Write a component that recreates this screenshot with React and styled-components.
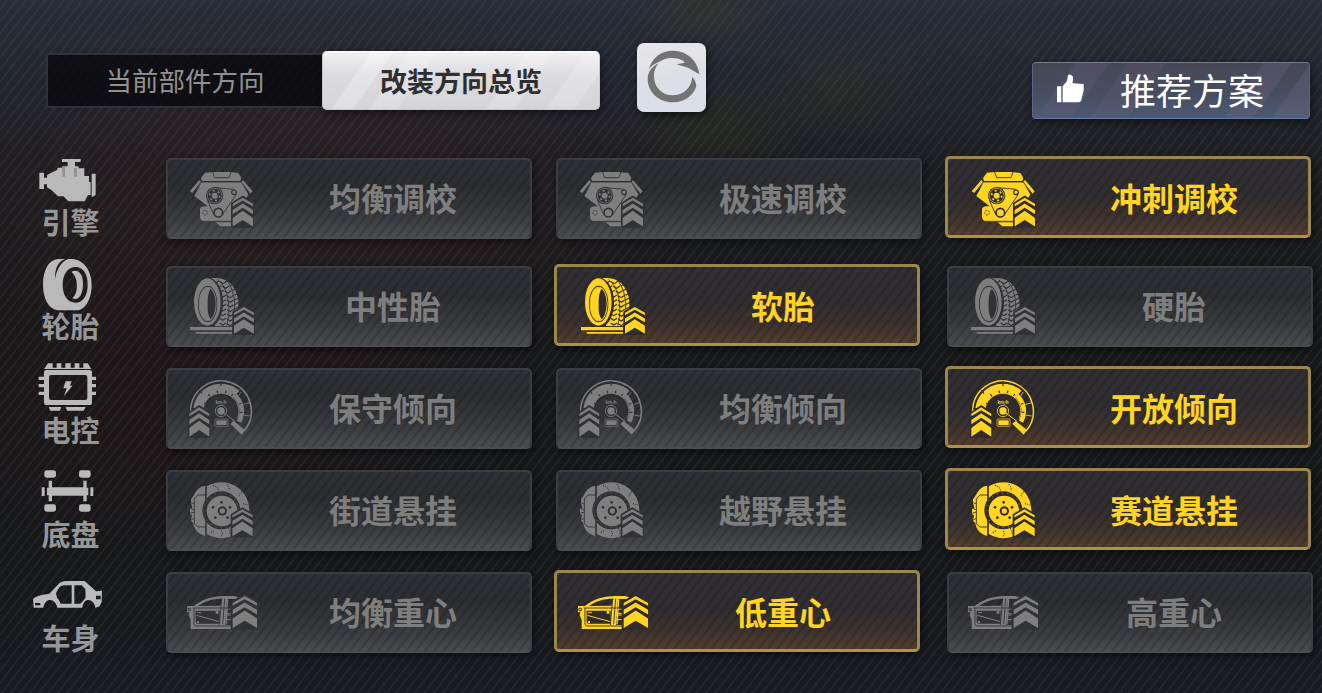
import React from 'react'
import styled, { createGlobalStyle, css } from 'styled-components'

const GlobalStyle = createGlobalStyle`
  * { box-sizing: border-box; }
  body {
    margin: 0;
    background: #1c1c1f;
    font-family: "Noto Sans CJK SC", "Noto Sans", sans-serif;
  }
`

const Chevrons = ({ x, y, sx = 1, sy = 1 }) => (
  <g transform={`translate(${x} ${y}) scale(${sx} ${sy})`}>
    <path className="cut" d="M-5 92V16L30 -7L64 15V92Z" />
    <path d="M0 19L30 0L61 19V27L30 9L0 27Z" />
    <path d="M0 38L30 18L61 38V51L30 31L0 51Z" />
    <path d="M0 62L30 40L61 62V88L30 68L0 88Z" />
  </g>
)

const EngineTune = () => (
  <PartSvg viewBox="81 57 216 198">
    <path d="M138 83L162 81H212L238 84L247 99L244 108H129L126 99Z" />
    <path d="M128 112H246L268 148L263 157L216 230H134Q123 226 123 214V192Q125 184 137 184H146L106 153Z" />
    <path d="M121 105L92 139L100 144L128 113ZM252 105L281 139L274 147L245 113Z" />
    <path d="M170 232H216V244H184Z" />
    <g className="line">
      <path d="M161 81L167 98H210L216 81M127 110H246M127 110L101 145M246 110L275 148" />
      <path d="M145 166L164 208M168 128L226 133M232 148L190 210M131 229H220" />
      <circle cx="138" cy="203" r="7" strokeDasharray="5 3" />
      <circle cx="225" cy="142" r="7" strokeWidth="3.5" />
      <circle cx="178" cy="203" r="13" strokeWidth="5" />
    </g>
    <circle className="cut" cx="167" cy="152" r="26" />
    <circle cx="167" cy="152" r="22" fill="none" stroke="currentColor" strokeWidth="2" />
    <circle cx="167" cy="152" r="15" fill="none" stroke="currentColor" strokeWidth="5" strokeDasharray="6 9.7" />
    <circle cx="167" cy="152" r="9" />
    <Chevrons x={221} y={158} sy={0.98} />
  </PartSvg>
)

const TyreTune = () => (
  <PartSvg viewBox="93 51 216 198">
    <path d="M168 70C205 66 226 80 238 101C250 122 253 145 248 165L232 213H180Z" />
    <g className="line">
      {[78, 92, 106, 120, 134, 148, 162, 176, 190, 204].map((y, i) => {
        const s = i < 3 ? (i - 3) * 7 : 0
        return <path key={y} d={`M${194 + s} ${y}L${203 + s} ${y + 6}L${213 + s} ${y}M${216 + s} ${y + 2}L${226 + s} ${y + 8}L${236 + s} ${y + 1}M${238 + s} ${y + 1}L${252 + s} ${y - 6}`} strokeWidth="3.4" />
      })}
      <path d="M188 74C221 98 229 165 215 211M211 72C237 98 244 150 236 173" />
    </g>
    <ellipse className="cut" cx="162" cy="143" rx="42" ry="74" />
    <ellipse cx="157" cy="141" rx="40" ry="71" />
    <ellipse cx="158" cy="147" rx="29" ry="55" className="cut" />
    <ellipse cx="158" cy="147" rx="27" ry="52" />
    <ellipse cx="158" cy="147" rx="24" ry="49" className="cut" />
    <path d="M158 98C125 99 125 194 158 196L168 194C157 178 158 167 158 147C158 125 160 112 168 100Z" />
    <path d="M105 216H231V226H105ZM122 231H231V236H122Z" />
    <Chevrons x={237} y={156} sx={0.98} sy={0.91} />
  </PartSvg>
)

const Gauge = () => (
  <PartSvg viewBox="81 48 216 198">
    <g fill="none" stroke="currentColor">
      <path d="M95 200V160A91 91 0 1 1 255 219" strokeWidth="4.5" />
      <path d="M117 160A69 69 0 0 1 232 109" strokeWidth="29" />
      <path d="M228 113A63 63 0 0 1 240 191" strokeWidth="14" />
      <path d="M132 165A54 54 0 1 1 235 182" strokeWidth="2.5" />
      <path d="M247 102L238 115M254 139L273 134M254 171L272 174" strokeWidth="2.5" />
    </g>
    <path d="M99 158H131V200H99Z" />
    <path d="M214 197L224 189L258 216L248 230Z" />
    <g className="line">
      <path d="M186 69V84M121 97L129 107M97 152L114 153M148 108L153 115M174 98L176 105M201 98L199 105M222 108L217 114M135 136L144 139M240 139L247 136M242 163H250" strokeWidth="3.5" />
    </g>
    <circle className="cut" cx="186" cy="160" r="45" />
    <text x="186" y="137" textAnchor="middle" fontSize="13" fontWeight="700">km/h</text>
    <circle cx="186" cy="159" r="17" fill="none" stroke="currentColor" strokeWidth="2.5" />
    <circle cx="186" cy="159" r="11" />
    <path d="M195 165L229 191" stroke="currentColor" strokeWidth="3" />
    <rect x="168" y="183" width="39" height="22" rx="3" fill="none" stroke="currentColor" strokeWidth="2" />
    <rect x="172" y="187" width="31" height="14" />
    <Chevrons x={91} y={148} sx={0.98} />
  </PartSvg>
)

const Brake = () => (
  <PartSvg viewBox="81 42 216 198">
    <path d="M139 72C126 70 111 84 105 99L96 112V122L100 137L93 140V156L99 160L96 176L103 184C105 202 120 219 139 222Z" />
    <path d="M143 73A84 84 0 1 1 143 216Z" />
    <g className="line">
      <path d="M141 70V222M139 99H117L106 111V185L117 195H139" />
      <path d="M94 139L107 144M94 154L106 150M97 122L106 126M97 174L106 169" />
      <path d="M162 70Q174 73 179 85M203 67Q213 76 210 87M249 89Q239 96 240 107M252 125L268 129M187 207Q193 215 187 222M208 199Q216 207 211 218M164 206Q159 212 153 211" strokeDasharray="3 4" strokeWidth="3.5" />
    </g>
    <circle className="cut" cx="187" cy="145" r="57" />
    <circle cx="187" cy="145" r="52" fill="none" stroke="currentColor" strokeDasharray="3 13" strokeWidth="2" />
    <circle cx="189" cy="147" r="46" />
    <g className="cut">
      <circle cx="190" cy="147" r="14" />
      <circle cx="188" cy="121" r="4" />
      <circle cx="162" cy="136" r="4" />
      <circle cx="169" cy="167" r="4" />
      <circle cx="213" cy="136" r="4" />
      <circle cx="206" cy="167" r="4" />
    </g>
    <circle cx="190" cy="147" r="8" />
    <Chevrons x={220} y={142} sy={0.92} />
  </PartSvg>
)

const Door = () => (
  <PartSvg viewBox="93 39 216 198">
    <path d="M96 123H117C140 104 171 93 207 93H237L250 97L247 102H216L210 180H228V192H107V164L101 151L103 142H96ZM129 123L196 122L202 101C171 101 147 109 129 123Z" fillRule="evenodd" />
    <path className="cut" d="M122 137H194V176H128Q122 176 122 170Z" />
    <g fill="none" stroke="currentColor">
      <path d="M118 132H228M212 145H228M208 164H228M205 150H228" strokeWidth="3" />
      <path d="M124 151L193 170M126 143H138" strokeWidth="3" />
      <path d="M218 103L213 178" strokeWidth="4" />
    </g>
    <path d="M182 137H190V146H182ZM126 168H132V174H126Z" />
    <g className="line">
      <path d="M117 130V177Q117 183 124 183H228M200 101L193 180M209 101L203 178M113 129H228" />
      <path d="M99 130H106V137H99Z" />
    </g>
    <Chevrons x={233} y={93} sx={1.2} sy={1.09} />
  </PartSvg>
)

const EngineSide = () => (
  <SideSvg viewBox="90 366 240 168">
    <path d="M186 387H242V396H225V409H236V415H253V438H267V456H272V495H264L254 514H205L190 499H174L155 481L141 472V463H132V477H118V428H132V443H141V435L172 419V413H187V409H203V396H186Z" />
    <path d="M275 431H287V494L279 500H275Z" />
    <path className="shade" d="M187 411V440H195V411ZM222 414V440H231V414Z" />
  </SideSvg>
)

const TyreSide = () => (
  <SideSvg viewBox="30 18 240 168">
    <path d="M114 27H136C115 34 104 54 105 88C109 61 122 36 143 28C178 20 215 50 215 104C215 145 197 180 171 181H114C84 177 69 143 69 104C69 59 86 29 114 27ZM167 51C143 51 128 72 128 105C128 138 145 158 166 158C190 158 203 135 203 104C203 71 189 51 167 51Z" fillRule="evenodd" />
    <path d="M154 65C176 56 190 73 189 104C188 135 176 153 157 145C177 128 175 81 154 65Z" />
  </SideSvg>
)

const ChipSide = () => (
  <SideSvg viewBox="30 330 240 168">
    <path d="M72 357L84 340H98V353H110V340H124V353H136V340H152V353H164V340H178V353H190V340H203L214 357Z" />
    <path d="M78 360H210Q216 360 216 367V458Q216 465 208 465H79Q72 465 72 458V367Q72 360 78 360ZM94 375Q87 375 87 382V443Q87 450 94 450H195Q202 450 202 443V382Q202 375 195 375Z" fillRule="evenodd" />
    <path d="M56 380H74V390H56ZM56 402H74V412H56ZM56 425H74V435H56ZM214 380H228V390H214ZM214 402H228V412H214ZM214 425H228V435H214Z" />
    <path d="M86 471H124L120 482H91ZM137 471H197L191 482H141ZM137 394H155L150 407H157L132 438L140 415H130Z" />
  </SideSvg>
)

const ChassisSide = () => (
  <SideSvg viewBox="30 12 240 168">
    <rect x="73" y="31" width="35" height="22" rx="7" />
    <rect x="177" y="31" width="35" height="22" rx="7" />
    <rect x="73" y="133" width="35" height="22" rx="7" />
    <rect x="177" y="133" width="35" height="22" rx="7" />
    <path d="M86 62H96V82H190V62H200V83H205V106H200V124H190V107H96V124H86V106H81V83H86ZM65 82H74V108H65ZM211 82H220V108H211Z" />
  </SideSvg>
)

const CarSide = () => (
  <SideSvg viewBox="30 324 240 168">
    <path d="M39 417Q45 407 88 401L113 375Q122 363 140 363H194L228 394L246 392L245 426L239 439L226 443C222 415 191 409 187 443H112C107 416 77 409 70 443H41ZM119 381Q112 390 108 400L111 413Q119 420 122 431H155V376H136Q125 375 119 381ZM163 376V431H181Q190 423 197 413L196 388L185 376ZM45 429V436H61V429ZM228 407V418H242V407Z" fillRule="evenodd" />
  </SideSvg>
)

const categories = [
  { name: '引擎', Side: EngineSide, Part: EngineTune, options: ['均衡调校', '极速调校', '冲刺调校'], picked: 2 },
  { name: '轮胎', Side: TyreSide, Part: TyreTune, options: ['中性胎', '软胎', '硬胎'], picked: 1 },
  { name: '电控', Side: ChipSide, Part: Gauge, options: ['保守倾向', '均衡倾向', '开放倾向'], picked: 2 },
  { name: '底盘', Side: ChassisSide, Part: Brake, options: ['街道悬挂', '越野悬挂', '赛道悬挂'], picked: 2 },
  { name: '车身', Side: CarSide, Part: Door, options: ['均衡重心', '低重心', '高重心'], picked: 1 },
]

const App = () => {
  return (
    <Screen>
      <GlobalStyle />
      <Header>
        <Tabs>
          <Tab>当前部件方向</Tab>
          <Tab $active>改装方向总览</Tab>
        </Tabs>
        <RefreshButton>
          <svg viewBox="111 129 207 207" width="69" height="69" fill="#737373">
            <path d="M147 207C156 172 185 152 217 152C245 152 268 163 282 183C290 193 296 208 298 223L264 203L230 193L254 188L250 182C238 176 228 174 216 174C198 174 186 180 175 187C164 191 154 198 147 207Z" />
            <path d="M176 190C165 203 162 215 162 230C162 262 187 286 218 286C249 286 275 263 277 230C284 238 289 250 289 258C282 285 255 307 219 307C175 307 143 275 143 237C143 217 154 200 176 190Z" />
          </svg>
        </RefreshButton>
        <RecommendButton>
          <svg viewBox="138 70 84 90" width="28" height="30" fill="#fff">
            <path d="M141 107H154V155H141ZM158 107L171 91L174 74Q180 68 188 77Q191 85 187 98L221 100V120L213 151Q211 155 204 155H158Z" />
          </svg>
          推荐方案
        </RecommendButton>
      </Header>
      <Body>
        <SideList>
          {categories.map(({ name, Side }) => (
            <SideItem key={name}>
              <Side />
              <SideName>{name}</SideName>
            </SideItem>
          ))}
        </SideList>
        <Rows>
          {categories.map(({ name, Part, options, picked }) => (
            <Row key={name}>
              {options.map((option, i) => (
                <Card key={option} $picked={i === picked}>
                  <Part />
                  <CardName>{option}</CardName>
                </Card>
              ))}
            </Row>
          ))}
        </Rows>
      </Body>
    </Screen>
  )
}

const Screen = styled.div`
  width: 1322px;
  height: 693px;
  overflow: hidden;
  background:
    repeating-linear-gradient(128deg, rgba(255, 255, 255, 0) 0 4.4px, rgba(150, 160, 155, 0.09) 5.8px 6.2px, rgba(255, 255, 255, 0) 7.4px),
    radial-gradient(ellipse 80px 45px at 705px 12px, rgba(70, 65, 20, 0.25), transparent),
    radial-gradient(ellipse 90px 60px at 715px 125px, rgba(60, 60, 20, 0.25), transparent),
    radial-gradient(ellipse 100px 50px at 840px 90px, rgba(60, 55, 25, 0.25), transparent),
    radial-gradient(ellipse 420px 200px at 300px 200px, rgba(55, 28, 32, 0.5), transparent),
    radial-gradient(ellipse 300px 160px at 180px 400px, rgba(48, 20, 22, 0.35), transparent),
    linear-gradient(180deg, #292c39 0, #22262e 80px, #1c1d20 170px, #17181a 330px, #161719 560px, #191b21 693px);
`

const Header = styled.header`
  display: flex;
  align-items: flex-start;
  height: 152px;
  padding: 43px 12px 0 46px;
`

const Tabs = styled.div`
  display: flex;
  align-items: center;
  width: 554px;
  height: 55px;
  margin-top: 10px;
  border: 2px solid #303237;
  border-right: 0;
  border-radius: 3px;
  background: rgba(6, 6, 8, 0.72);
`

const Tab = styled.div`
  flex: none;
  width: 274px;
  padding-bottom: 2px;
  line-height: 50px;
  text-align: center;
  font-size: 26.5px;
  color: #929292;

  ${({ $active }) => $active && css`
    width: 278px;
    height: 59px;
    line-height: 57px;
    border: 1px solid #c9c9cd;
    border-top-color: #fff;
    border-radius: 5px;
    font-size: 27px;
    font-weight: 700;
    color: #2e2e30;
    background:
      linear-gradient(125deg, transparent 15%, rgba(255, 255, 255, 0.25) 15.5% 22%, transparent 22.5% 27%, rgba(255, 255, 255, 0.18) 27.5% 36%, transparent 36.5% 64%, rgba(255, 255, 255, 0.18) 64.5% 73%, transparent 73.5% 83%, rgba(255, 255, 255, 0.18) 83.5% 92%, transparent 92.5%),
      linear-gradient(180deg, #f1f1f3, #dcdce0 40%, #d5d5d8);
    box-shadow: 2px 3px 8px rgba(0, 0, 0, 0.5);
  `}
`

const RefreshButton = styled.div`
  width: 69px;
  height: 69px;
  margin-left: 37px;
  border-radius: 7px;
  background: linear-gradient(170deg, #e8e7ea, #dedfe6 50%, #d9deea);
  box-shadow: 2px 3px 9px rgba(0, 0, 0, 0.55);
`

const RecommendButton = styled.div`
  display: flex;
  align-items: center;
  gap: 36px;
  width: 278px;
  height: 57px;
  margin: 19px 0 0 auto;
  padding: 0 0 4px 23px;
  border: 1px solid #5d6584;
  border-top-color: #777a89;
  border-bottom-color: #6378a6;
  border-radius: 4px;
  font-size: 36px;
  line-height: 50px;
  color: #fff;
  background:
    linear-gradient(125deg, transparent 13%, rgba(105, 95, 125, 0.28) 13.5% 24%, transparent 24.5% 30%, rgba(105, 95, 125, 0.24) 30.5% 42%, transparent 42.5% 73%, rgba(110, 100, 130, 0.3) 73.5% 82%, transparent 82.5% 88%, rgba(120, 110, 135, 0.25) 88.5%),
    linear-gradient(180deg, #454754, #474f63 60%, #4c5974);
  box-shadow: 2px 3px 9px rgba(0, 0, 0, 0.5);
`

const Body = styled.main`
  display: flex;
`

const SideList = styled.aside`
  display: flex;
  flex-direction: column;
  gap: 18px;
  width: 166px;
  padding-left: 30px;
`

const SideItem = styled.div`
  width: 80px;
  height: 86px;
  text-align: center;
`

const SideSvg = styled.svg`
  display: block;
  width: 80px;
  height: 56px;
  fill: #b9b9b9;

  .shade {
    fill: #929292;
  }
`

const SideName = styled.div`
  padding-left: 1px;
  font-size: 29px;
  font-weight: 700;
  line-height: 26px;
  color: #969696;
`

const Rows = styled.div`
  display: flex;
  flex-direction: column;
  gap: 20px;
  padding-top: 6px;
`

const Row = styled.div`
  display: grid;
  grid-template-columns: 390px 391px 366px;
  height: 82px;

  &:first-child {
    margin-bottom: 6px;
  }
`

const Card = styled.div`
  --cut: #313235;
  display: flex;
  align-items: center;
  width: 366px;
  height: 81px;
  padding: 0 2px 3px 18px;
  border: 2px solid #3b3d42;
  border-bottom-color: #4b4c50;
  border-radius: 5px;
  color: #7e7e7e;
  background:
    repeating-linear-gradient(128deg, rgba(0, 0, 0, 0) 0 3.6px, rgba(0, 0, 0, 0.16) 5.2px 6px, rgba(0, 0, 0, 0) 7.4px),
    linear-gradient(180deg, #2e3035, #2d2e31 35%, #38393c 68%, #4a4b4e);
  box-shadow: 2px 3px 8px rgba(0, 0, 0, 0.5);

  ${({ $picked }) => $picked && css`
    --cut: #302c2e;
    height: 82px;
    margin: -2px 0 0 -2px;
    padding: 0 0 0 20px;
    border: 3px solid #9b874b;
    border-bottom-color: #b09049;
    color: #ffd422;
    background:
      repeating-linear-gradient(128deg, rgba(0, 0, 0, 0) 0 3.6px, rgba(0, 0, 0, 0.16) 5.2px 6px, rgba(0, 0, 0, 0) 7.4px),
      linear-gradient(180deg, #322f32, #302e31 45%, #3c322f 75%, #523d2d);
  `}
`

const PartSvg = styled.svg`
  flex: none;
  width: 72px;
  height: 66px;
  fill: currentColor;

  .cut {
    fill: var(--cut);
  }
  .line {
    fill: none;
    stroke: var(--cut);
    stroke-width: 2.6;
  }
`

const CardName = styled.div`
  flex: 1;
  text-align: center;
  font-size: 32px;
  font-weight: 700;
  line-height: 40px;
`

export default App
